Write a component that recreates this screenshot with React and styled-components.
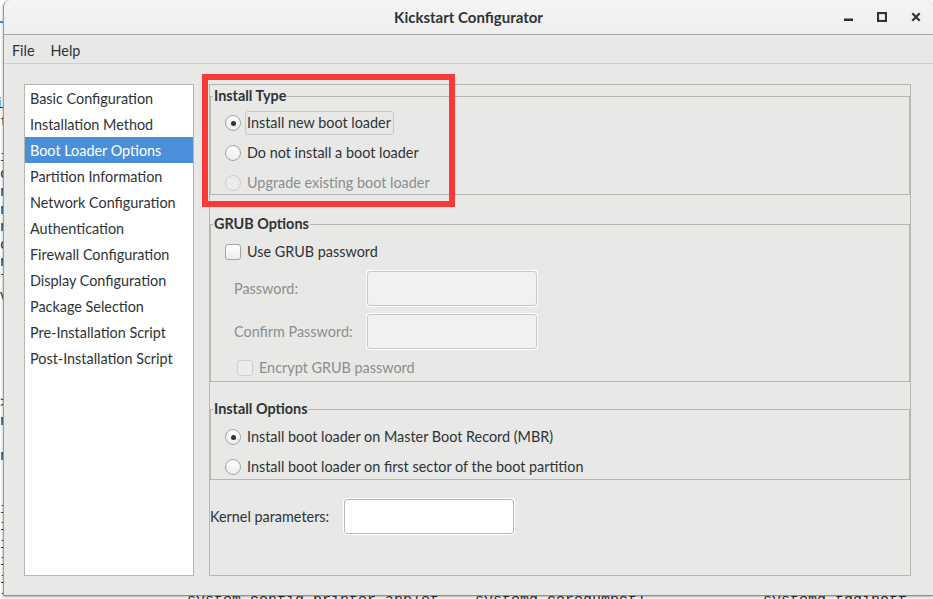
import React from "react";
import styled, { createGlobalStyle } from "styled-components";

const GlobalStyle = createGlobalStyle`
  html, body { margin: 0; padding: 0; background: #ffffff; overflow: hidden; }
  #root { width: 933px; height: 599px; }
`;

const UI_FONT = `"Lato", "Noto Sans", sans-serif`;

const Desktop = styled.div`
  position: relative;
  width: 933px;
  height: 599px;
  overflow: hidden;
  background: #ffffff;
`;

const TermColumn = styled.pre`
  position: absolute;
  left: 0;
  top: 0;
  width: 3px;
  height: 599px;
  overflow: hidden;
  margin: 0;
  padding-top: 96px;
  box-sizing: border-box;
  font-family: "Liberation Mono", monospace;
  font-size: 14.7px;
  line-height: 17.6px;
  color: #2e3436;
  text-indent: -5px;
`;

const TermBottom = styled.pre`
  position: absolute;
  left: 0;
  top: 595px;
  width: 933px;
  height: 4px;
  overflow: hidden;
  margin: 0;
  padding-left: 187px;
  box-sizing: border-box;
  font-family: "Liberation Mono", monospace;
  font-size: 15px;
  line-height: 17.6px;
  color: #2e3436;
  & > span {
    display: block;
    margin-top: -3px;
  }
`;

const TermTab = styled.div`
  position: absolute;
  left: 0;
  top: 21px;
  width: 4px;
  height: 2px;
  background: #4a90d9;
`;

const Window = styled.div`
  position: absolute;
  left: 3px;
  top: 0;
  width: 930px;
  height: 596px;
  display: flex;
  flex-direction: column;
  background: #e8e8e7;
  border-left: 1px solid #9a9a9a;
  border-bottom: 1px solid #8f8f8f;
  border-radius: 7px 7px 0 0;
  box-shadow: 0 1px 3px rgba(0, 0, 0, 0.35);
  font-family: ${UI_FONT};
  font-size: 14.4px;
  color: #2e3436;
  box-sizing: border-box;
  overflow: hidden;
`;

const TitleBar = styled.div`
  height: 34px;
  flex: none;
  display: grid;
  grid-template-columns: 1fr auto 1fr;
  align-items: center;
  background: linear-gradient(#f5f5f5, #efefef);
  border-bottom: 1px solid #a8a8a8;
  border-radius: 7px 7px 0 0;
`;

const Title = styled.div`
  grid-column: 2;
  font-weight: bold;
  font-size: 15px;
  color: #2e3436;
  padding-bottom: 1px;
`;

const TitleButtons = styled.div`
  grid-column: 3;
  justify-self: end;
  display: flex;
`;

const TitleButton = styled.div`
  width: 34px;
  height: 34px;
  display: flex;
  align-items: center;
  justify-content: center;
  color: #2e3436;
`;

const MenuBar = styled.div`
  height: 28px;
  flex: none;
  display: flex;
  align-items: center;
  padding-left: 8px;
  border-bottom: 1px solid #cdcdcc;
`;

const MenuItem = styled.div`
  padding: 3px 8px 0 0;
  margin-right: 8px;
`;

const Content = styled.div`
  flex: 1;
  display: flex;
  gap: 15px;
  padding: 20px 22px 19px 20px;
  min-height: 0;
`;

const ListBox = styled.div`
  width: 170px;
  flex: none;
  box-sizing: border-box;
  border: 1px solid #b6b6b3;
  background: #ffffff;
  display: flex;
  flex-direction: column;
`;

const ListRow = styled.div`
  height: 26px;
  box-sizing: border-box;
  display: flex;
  align-items: center;
  padding: 0 0 0 5px;
  background: ${(p) => (p.$selected ? "#4a90d9" : "transparent")};
  color: ${(p) => (p.$selected ? "#ffffff" : "#2e3436")};
  white-space: nowrap;
`;

const Viewport = styled.div`
  flex: 1;
  box-sizing: border-box;
  border: 1px solid #b6b6b3;
  display: flex;
  flex-direction: column;
`;

const Frame = styled.fieldset`
  margin: ${(p) => p.$mt}px 0 0 0;
  padding: 0;
  min-width: 0;
  border: 1px solid #b6b6b3;
`;

const Legend = styled.legend`
  margin-left: 2px;
  padding: 0 1px;
  font-weight: bold;
  line-height: 18px;
  height: 18px;
  box-sizing: border-box;
`;

const FrameBody = styled.div`
  display: flex;
  flex-direction: column;
  gap: 8px;
  padding: ${(p) => p.$pad};
`;

const Row = styled.div`
  height: 22px;
  display: flex;
  align-items: center;
  padding-left: ${(p) => p.$indent || 14}px;
  color: ${(p) => (p.$disabled ? "#8b8e8f" : "#2e3436")};
  white-space: nowrap;
`;

const RadioCircle = styled.span`
  width: 16px;
  height: 16px;
  box-sizing: border-box;
  border-radius: 50%;
  border: 1px solid ${(p) => (p.$disabled ? "#cfcfcd" : "#a4a4a1")};
  background: ${(p) =>
    p.$disabled ? "#ececeb" : "linear-gradient(#ffffff, #ececeb)"};
  display: flex;
  align-items: center;
  justify-content: center;
  flex: none;
  &::after {
    content: "";
    width: 5px;
    height: 5px;
    border-radius: 50%;
    background: ${(p) => (p.$checked ? "#2e3436" : "transparent")};
  }
`;

const CheckBox = styled.span`
  width: 16px;
  height: 16px;
  box-sizing: border-box;
  border-radius: 3px;
  border: 1px solid ${(p) => (p.$disabled ? "#cfcfcd" : "#a4a4a1")};
  background: ${(p) =>
    p.$disabled ? "#ececeb" : "linear-gradient(#ffffff, #ececeb)"};
  flex: none;
`;

const OptionLabel = styled.span`
  margin-left: 4px;
  height: 24px;
  box-sizing: border-box;
  display: flex;
  align-items: center;
  padding: 0 2px 1px 1px;
  border: 1px solid ${(p) => (p.$focused ? "#c8c8c6" : "transparent")};
  border-radius: 3px;
`;

const FieldGrid = styled.div`
  display: grid;
  grid-template-columns: 133px 170px;
  row-gap: 8px;
  align-items: center;
  padding-left: 23px;
`;

const FieldLabel = styled.span`
  color: #8b8e8f;
  white-space: nowrap;
  padding-bottom: 1px;
`;

const Entry = styled.div`
  width: 170px;
  height: 35px;
  box-sizing: border-box;
  border: 1px solid ${(p) => (p.$disabled ? "#c7c7c5" : "#b6b6b3")};
  border-radius: 3px;
  background: ${(p) => (p.$disabled ? "#f1f1f1" : "#ffffff")};
  box-shadow: 0 0 0 1px #ffffff;
`;

const KernelRow = styled.div`
  margin-top: 19px;
  display: flex;
  align-items: center;
`;

const KernelLabel = styled.span`
  width: 134px;
  flex: none;
  white-space: nowrap;
  padding-bottom: 1px;
`;

const Annotation = styled.div`
  position: absolute;
  left: 202px;
  top: 74px;
  width: 253px;
  height: 133px;
  box-sizing: border-box;
  border: 6px solid #fd3838;
  pointer-events: none;
`;

const MinIcon = () => (
  <svg width="10" height="10" viewBox="0 0 10 10">
    <rect x="1" y="6.5" width="9" height="2.5" fill="#2e3436" />
  </svg>
);
const MaxIcon = () => (
  <svg width="10" height="10" viewBox="0 0 10 10">
    <rect x="1" y="1" width="8" height="8" fill="none" stroke="#2e3436" strokeWidth="2.2" />
  </svg>
);
const CloseIcon = () => (
  <svg width="10" height="10" viewBox="0 0 10 10">
    <path d="M1.3 1.3 L8.7 8.7 M8.7 1.3 L1.3 8.7" stroke="#2e3436" strokeWidth="2.2" />
  </svg>
);

const termLines = [
  "i", "t", "", "i", "o", "n", "n", "n", "o", "n", "7", "V", "", "", "", "",
  "", ">", "n", "", "n", "", "", "i", "i", "i", "i", "i", "i", "n",
];

const sections = [
  "Basic Configuration",
  "Installation Method",
  "Boot Loader Options",
  "Partition Information",
  "Network Configuration",
  "Authentication",
  "Firewall Configuration",
  "Display Configuration",
  "Package Selection",
  "Pre-Installation Script",
  "Post-Installation Script",
];

function Radio({ checked, disabled, focused, children }) {
  return (
    <Row $disabled={disabled}>
      <RadioCircle $checked={checked} $disabled={disabled} />
      <OptionLabel $focused={focused}>{children}</OptionLabel>
    </Row>
  );
}

function Check({ disabled, indent, children }) {
  return (
    <Row $disabled={disabled} $indent={indent}>
      <CheckBox $disabled={disabled} />
      <OptionLabel>{children}</OptionLabel>
    </Row>
  );
}

export default function App() {
  return (
    <Desktop>
      <GlobalStyle />
      <TermColumn>{termLines.join("\n")}</TermColumn>
      <TermBottom>
        <span>{"system config printer applet    systemd coredumpctl             systemd tdqinotf"}</span>
      </TermBottom>
      <TermTab />
      <Window>
        <TitleBar>
          <Title>Kickstart Configurator</Title>
          <TitleButtons>
            <TitleButton><MinIcon /></TitleButton>
            <TitleButton><MaxIcon /></TitleButton>
            <TitleButton><CloseIcon /></TitleButton>
          </TitleButtons>
        </TitleBar>
        <MenuBar>
          <MenuItem>File</MenuItem>
          <MenuItem>Help</MenuItem>
        </MenuBar>
        <Content>
          <ListBox>
            {sections.map((s) => (
              <ListRow key={s} $selected={s === "Boot Loader Options"}>
                {s}
              </ListRow>
            ))}
          </ListBox>
          <Viewport>
            <Frame $mt={2}>
              <Legend>Install Type</Legend>
              <FrameBody $pad="7px 0 0 0">
                <Radio checked focused>Install new boot loader</Radio>
                <Radio>Do not install a boot loader</Radio>
                <Radio disabled>Upgrade existing boot loader</Radio>
              </FrameBody>
            </Frame>
            <Frame $mt={20}>
              <Legend>GRUB Options</Legend>
              <FrameBody $pad="8px 0 2px 0">
                <Check>Use GRUB password</Check>
                <FieldGrid>
                  <FieldLabel>Password:</FieldLabel>
                  <Entry $disabled />
                  <FieldLabel>Confirm Password:</FieldLabel>
                  <Entry $disabled />
                </FieldGrid>
                <Check disabled indent={26}>Encrypt GRUB password</Check>
              </FrameBody>
            </Frame>
            <Frame $mt={18}>
              <Legend>Install Options</Legend>
              <FrameBody $pad="8px 0 1px 0">
                <Radio checked>Install boot loader on Master Boot Record (MBR)</Radio>
                <Radio>Install boot loader on first sector of the boot partition</Radio>
              </FrameBody>
            </Frame>
            <KernelRow>
              <KernelLabel>Kernel parameters:</KernelLabel>
              <Entry />
            </KernelRow>
          </Viewport>
        </Content>
      </Window>
      <Annotation />
    </Desktop>
  );
}
